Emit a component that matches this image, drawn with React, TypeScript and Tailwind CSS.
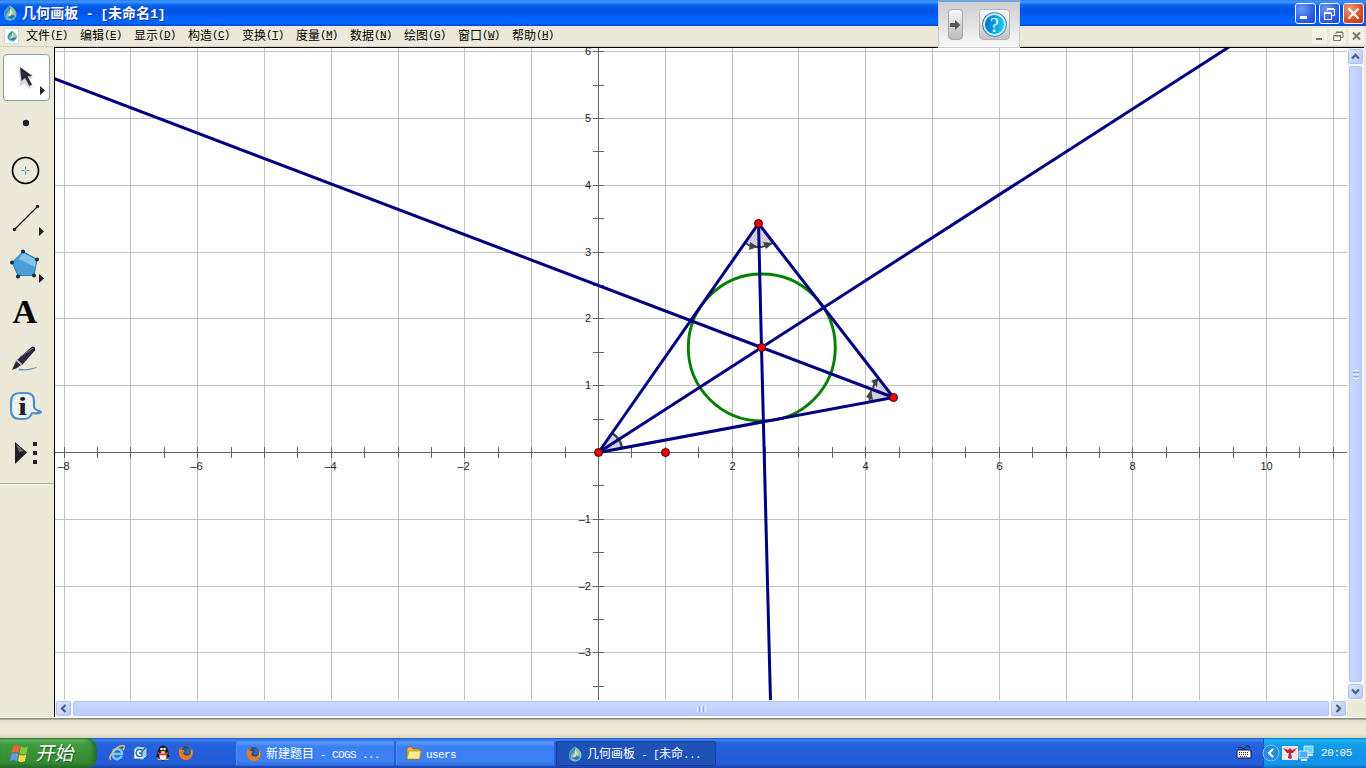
import React from 'react'

const UNIT = 66.8
const OX = 598
const OY = 452

const menus = [
  { name: "文件", key: "F" },
  { name: "编辑", key: "E" },
  { name: "显示", key: "D" },
  { name: "构造", key: "C" },
  { name: "变换", key: "T" },
  { name: "度量", key: "M" },
  { name: "数据", key: "N" },
  { name: "绘图", key: "G" },
  { name: "窗口", key: "W" },
  { name: "帮助", key: "H" },
]

// Chinese glyphs are full width, latin ones exactly half of that
const Mixed = ({ text, big = false }: { text: string; big?: boolean }) => (
  <span className="whitespace-pre">
    {text.split(/([\u4e00-\u9fff]+)/).map((part, i) =>
      i % 2 ? (
        <span key={i}>{part}</span>
      ) : (
        <span
          key={i}
          className={
            big
              ? "font-['Liberation_Mono',monospace] text-[13px] tracking-[-0.4px]"
              : "font-['Liberation_Mono',monospace] text-[11px] tracking-[-0.6px]"
          }
        >
          {part}
        </span>
      )
    )}
  </span>
)

const Drop = ({ size = 16 }: { size?: number }) => (
  <svg width={size} height={size} viewBox="0 0 16 16" className="shrink-0">
    <path d="M8 .5C4.500 3 2 5.500 2 9c0 4 2.500 6.500 6 6.500s6.500-2.500 6.500-6.500C14.500 5.500 11.500 3 8 .5Z" fill="#7fb9c4" />
    <path d="M8 1c1 3-1 5-3 7-1.500 2-1 4 0 5.500C2.500 12 1.600 9 3.500 6 5 4 6.500 3 8 1Z" fill="#2b93b4" />
    <path d="M8 3.500 12 8 9 9v4L6 10l2-2Z" fill="#efe4a6" />
    <path d="M9 2c3 2 5.500 5 5 8L10 7Z" fill="#93c99a" />
    <path d="m5 12.500 5 1.500 3.500-3-3.500-1Z" fill="#2478b8" />
  </svg>
)

const Firefox = () => (
  <svg width="16" height="16" viewBox="0 0 16 16" className="shrink-0">
    <circle cx="8" cy="8" r="7" fill="#e4661b" />
    <circle cx="8.500" cy="6.500" r="5" fill="#3268b5" />
    <path d="M5 1.500c3-1 6 0 8 2.500-2-1-4-1-5 0 2 1 1 3-1 3 1 3 4 3 6 0-1 5-7 6-10 2Z" fill="#285390" />
    <path d="M2 3c0 2 1 2 3 2 1 0 2 1 1 2L5 8c1 3 5 4 8 1l1-5c2 5-1 11-6 11C2 15-1 8 2 3Z" fill="#ee7a20" />
    <path d="M13.500 4c1.500 4-.5 8-5.500 8 4 0 6-3 5.500-8Z" fill="#ffd24a" />
  </svg>
)

const TitleBar = () => (
  <div className="flex h-[26px] shrink-0 items-center bg-[linear-gradient(#2b83f0_0,#3d95ff_2px,#0a64ed_5px,#0054e3_9px,#0055e8_13px,#0066ff_19px,#0066ff_23px,#0046c8_26px)] pr-[2px] pl-[2px] text-white">
    <Drop />
    <div className="ml-[4px] grow text-[14px] leading-[20px] font-bold [text-shadow:1px_1px_0_#0a2f8c]">
      <span className="tracking-[0.1px]">
        <Mixed text="几何画板 - [未命名1]" big />
      </span>
    </div>
    <div className="flex gap-[3px]">
      <div className="h-[21px] w-[21px] rounded-[3px] border border-white bg-[radial-gradient(circle_at_30%_25%,#6d98f5,#2c5ee5_60%,#1b45c9)]">
        <svg width="19" height="19"><rect x="4" y="12" width="7" height="3" fill="#fff" /></svg>
      </div>
      <div className="h-[21px] w-[21px] rounded-[3px] border border-white bg-[radial-gradient(circle_at_30%_25%,#6d98f5,#2c5ee5_60%,#1b45c9)]">
        <svg width="19" height="19" fill="none" stroke="#fff" shapeRendering="crispEdges">
          <path d="M7 7V5h7v6h-3M7 4h7" />
          <path d="M4 9h7v6H4zM4 8h7" />
        </svg>
      </div>
      <div className="h-[21px] w-[21px] rounded-[3px] border border-white bg-[radial-gradient(circle_at_30%_25%,#f09a82,#dc4b27_60%,#bd3010)]">
        <svg width="19" height="19"><path d="m4.500 4.500 10 10M14.500 4.500l-10 10" stroke="#fff" strokeWidth="2.200" /></svg>
      </div>
    </div>
  </div>
)

const MenuBar = () => (
  <div className="flex h-[21px] shrink-0 items-center border-b border-[#d0cdbd] bg-[#ece9d8] pl-[4px] text-[12px] leading-[18px] text-black">
    <div className="flex h-[16px] w-[15px] items-center justify-center rounded-[1px] border border-[#d4d8e4] bg-[#f7faff]">
      <Drop size={12} />
    </div>
    <div className="ml-[7px] flex grow pb-[2px]">
      {menus.map((m) => (
        <div key={m.key} className="flex w-[54px] items-center">
          <span>{m.name}</span>
          <span className="font-['Liberation_Mono',monospace] text-[11px] tracking-[-0.7px]">
            (<u className="underline-offset-1">{m.key}</u>)
          </span>
        </div>
      ))}
    </div>
    <div className="flex gap-[3px] pr-[2px] pb-px">
      <svg width="15" height="16" className="bg-[#f3f1e8]"><path d="M4 11h6" stroke="#77756b" strokeWidth="2" /></svg>
      <svg width="16" height="16" className="bg-[#f3f1e8]" fill="none" stroke="#77756b">
        <path d="M6 6V4.500h7v5h-2M6 4h7M3.500 7.500h7v5h-7zM4 8h6" />
      </svg>
      <svg width="15" height="16" className="bg-[#f3f1e8]"><path d="m4 4.500 7 7m0-7-7 7" stroke="#77756b" strokeWidth="2" /></svg>
    </div>
  </div>
)

const HelpPanel = () => (
  <div className="absolute top-0 left-[938px] flex h-[48px] w-[82px] items-start border border-t-2 border-[#c5c9d1] border-t-[#70a3df] bg-[linear-gradient(#cdcdcd,#e3e3e3_50%,#fafafa)] pt-[7px] pl-[9px]">
    <div className="flex h-[31px] w-[15px] items-center justify-center rounded-[4px] border border-[#a7a7a7] bg-[linear-gradient(#fafafa,#d8d8d8_50%,#bcbcbc)]">
      <svg width="11" height="12"><path d="M0 4h5V1l5.500 5L5 11V8H0Z" fill="#5c5c5c" /></svg>
    </div>
    <div className="ml-[16px] flex h-[31px] w-[31px] items-center justify-center rounded-[4px] border border-[#b5b5b5] bg-[linear-gradient(#fff,#d5d5d5_65%,#c2c2c2)]">
      <div className="flex h-[25px] w-[25px] items-center justify-center rounded-full border border-[#4f86b5] bg-[linear-gradient(100deg,#075dad,#0799df_45%,#1be2fa)] font-['Liberation_Serif',serif] text-[20px] leading-none text-white ring-inset ring-2 ring-[#c6edff]">
        ?
      </div>
    </div>
  </div>
)

const Flyout = () => <path d="m39 32 5 4.500-5 4.500Z" fill="#231f2c" />

const tools = [
  <>
    <path d="m19 15 1 18 4-4 5 6 4-3-5-6 5-2Z" fill="#b9bdcf" opacity=".6" />
    <path d="m20 13 1.500 14 3.500-3 4.500 8 2.500-1.500-4.500-8 5-.5Z" fill="#2c293b" />
    <path d="m40 32 5 4.500-5 4.500Z" fill="#231f2c" />
  </>,
  <circle cx="26" cy="22" r="3.200" fill="#231f30" />,
  <>
    <circle cx="25.500" cy="22.500" r="13" fill="none" stroke="#000" strokeWidth="1.700" />
    <path d="M25.500 18.500v8M21.500 22.500h8" stroke="#4a9ac4" />
    <circle cx="25.500" cy="22.500" r="1" fill="#ece9d8" />
  </>,
  <>
    <path d="M14.500 34.500 37.500 11.500" stroke="#222" strokeWidth="1.300" />
    <circle cx="14.500" cy="34.500" r="1.700" fill="#222" />
    <circle cx="37.500" cy="11.500" r="1.700" fill="#222" />
    <Flyout />
  </>,
  <>
    <path d="m23 9.500 14 8-3 16H18L12 20.500Z" fill="#4a9fd6" stroke="#2e7eb7" />
    <path d="m23 11 13 7-1 7-16-8Z" fill="#b7dcf4" opacity=".6" />
    {[[23, 9.5], [37, 17.5], [34, 33.5], [18, 34.5], [12, 20.5]].map(([x, y]) => (
      <circle key={x} cx={x} cy={y} r="2" fill="#102c42" />
    ))}
    <Flyout />
  </>,
  <text x="12.500" y="34" fontFamily="Liberation Serif, serif" fontWeight="bold" fontSize="34" fill="#000">A</text>,
  <>
    <path d="m12 34 4-9 5 4-4 3Z" fill="#292638" />
    <path d="M17 24 32 10.500q4 0 3 4L22 29Z" fill="#2e2a3d" />
    <path d="m20 21 13-9" stroke="#817d8c" />
    <path d="m16.500 24 5 4" stroke="#bcbac4" strokeWidth="1.300" />
    <path d="M19 32.500q7 2 19-2-4 4.500-19 4Z" fill="#559fc8" />
  </>,
  <>
    <path d="M20 10h6q8 0 8 8v6q0 2 7 5-3 2-9 1-2 6-8 6h-4q-9 0-9-9v-8q0-9 9-9Z" fill="#f1f1ec" stroke="#4791ce" strokeWidth="2.200" strokeLinejoin="round" />
    <text x="18" y="32" fontFamily="Liberation Serif, serif" fontWeight="bold" fontSize="25" textLength="9" lengthAdjust="spacingAndGlyphs" fill="#201d2c">i</text>
  </>,
  <>
    <path d="M15 12 27 22.500 15 34Z" fill="#211e2d" />
    <path d="m16 14 8 7-5 1Z" fill="#6b6776" />
    <path d="M33 12h4v4h-4zM33 21h4v4h-4zM33 30h4v4h-4z" fill="#231f2c" />
  </>,
]

const Toolbox = () => (
  <div className="w-[54px] shrink-0 bg-[#ece9d8] pt-[7px]">
    <div className="h-[430px] border-b border-[#aaa797]">
      {tools.map((tool, i) => (
        <div
          key={i}
          className={
            i === 0
              ? "ml-[3px] h-[47px] w-[47px] rounded-[4px] border border-[#849cab] bg-white"
              : "h-[47px]"
          }
        >
          <svg width={i === 0 ? 45 : 54} height={i === 0 ? 45 : 47} viewBox={i === 0 ? "4 1 45 45" : "0 0 54 47"}>
            {tool}
          </svg>
        </div>
      ))}
    </div>
    <div className="h-px bg-white" />
  </div>
)

const xs = [-8, -7, -6, -5, -4, -3, -2, -1, 0, 1, 2, 3, 4, 5, 6, 7, 8, 9, 10, 11]
const ys = [-3, -2, -1, 0, 1, 2, 3, 4, 5, 6]
const px = (v: number) => Math.round(OX + v * UNIT) + 0.5
const py = (v: number) => Math.round(OY - v * UNIT) + 0.5
const label = (v: number) => (v < 0 ? "–" + -v : String(v))

const Plot = () => (
  <svg width="1292" height="652" viewBox="55 48 1292 652" className="block shrink-0 bg-white" fontFamily="Liberation Sans, sans-serif" fontSize="11">
    <g stroke="#c0c0c0">
      {xs.map((v) => <path key={v} d={`M${px(v)} 48V700`} />)}
      {ys.map((v) => <path key={v} d={`M55 ${py(v)}H1347`} />)}
    </g>
    <g stroke="#646464">
      <path d="M55 452.500H1347M598.500 48V700" />
      {xs.flatMap((v) => [v, v + 0.5]).filter((v) => v < 11.200).map((v) => (
        <path key={v} d={`M${px(v)} 447v11`} />
      ))}
      {ys.flatMap((v) => [v, v - 0.5]).map((v) => (
        <path key={v} d={`M593 ${py(v)}h11`} />
      ))}
    </g>
    <g fill="#222">
      {xs.filter((v) => v && v % 2 === 0).map((v) => (
        <text key={v} x={px(v) - (v < 0 ? 1 : 0)} y="470" textAnchor="middle">{label(v)}</text>
      ))}
      {ys.filter((v) => v).map((v) => (
        <text key={v} x="591" y={py(v) + 3.5} textAnchor="end">{label(v)}</text>
      ))}
    </g>
    {/* angle marks */}
    <g fill="#d2d2de">
      <path d="M758.500 223.500 745 243q13 9 28 0Z" />
      <path d="M893.500 397.500 878 378q-10 10-8 24Z" />
      <path d="M598.500 452.500 612 433q10 7 10 15Z" />
    </g>
    <g fill="none" stroke="#444" strokeWidth="2">
      <path d="M745 243q6 4 13.500 4 8 0 14-4M878 379q-4 4-5 9M871 391q-2 5-1 11" />
      <path d="M612 433q9 6 10 15" strokeWidth="2.500" />
    </g>
    <path d="m750 242 8 5-9 3ZM763 242l10 1-7 6ZM871 381l7-3-1 9ZM866 397l5-7 2 10Z" fill="#444" />
    <circle cx="761.800" cy="347.500" r="73.500" fill="none" stroke="#008000" strokeWidth="2.900" />
    <g fill="none" stroke="#000080" strokeWidth="3">
      <path d="M598.500 452.500 758.500 223.500 893.500 397.500Z" />
      <path d="M598.500 452.500 761.500 347.500 1229 47" />
      <path d="M893.500 397.500 761.500 347.500 54 78.500" />
      <path d="M758.500 223.500 761.500 347.500 770.500 701" />
    </g>
    <g fill="#f00000" stroke="#300" strokeWidth="1">
      <circle cx="758.500" cy="223.500" r="4" />
      <circle cx="893.500" cy="397.500" r="4" />
      <circle cx="761.500" cy="347.500" r="4" />
      <circle cx="598.500" cy="452.500" r="4" />
      <circle cx="665.500" cy="452.500" r="4" />
    </g>
  </svg>
)

const ScrollButton = ({ d }: { d: string }) => (
  <div className="flex h-[15px] w-[15px] shrink-0 items-center justify-center rounded-[2px] border border-[#b0c3ef] bg-[linear-gradient(135deg,#dce6ff,#b9cafa)]">
    <svg width="11" height="11"><path d={d} fill="none" stroke="#4d6185" strokeWidth="2.300" /></svg>
  </div>
)

const VScroll = () => (
  <div className="flex w-[17px] shrink-0 flex-col items-center gap-[2px] bg-[#f8f8f4] py-[1px]">
    <ScrollButton d="m2 7.500 3.500-3.500L9 7.500" />
    <div className="flex w-[13px] grow flex-col items-center justify-center gap-px rounded-[2px] border border-[#b1c4f1] bg-[linear-gradient(90deg,#cad8ff,#bccdfb)]">
      <div className="h-px w-[6px] bg-[#edf3ff]" />
      <div className="h-px w-[6px] bg-[#8fa9dc]" />
      <div className="h-px w-[6px] bg-[#edf3ff]" />
      <div className="h-px w-[6px] bg-[#8fa9dc]" />
      <div className="h-px w-[6px] bg-[#edf3ff]" />
    </div>
    <ScrollButton d="M2 3.500 5.500 7 9 3.500" />
  </div>
)

const HScroll = () => (
  <div className="flex h-[17px] shrink-0 items-center bg-[#f8f8f4]">
    <div className="flex w-[1292px] items-center gap-[2px] px-[1px]">
      <ScrollButton d="M7.500 2 4 5.500 7.500 9" />
      <div className="flex h-[15px] grow items-center justify-center gap-px rounded-[2px] border border-[#b1c4f1] bg-[linear-gradient(#cad8ff,#bccdfb)]">
        <div className="h-[6px] w-px bg-[#edf3ff]" />
        <div className="h-[6px] w-px bg-[#8fa9dc]" />
        <div className="h-[6px] w-px bg-[#edf3ff]" />
        <div className="h-[6px] w-px bg-[#8fa9dc]" />
        <div className="h-[6px] w-px bg-[#edf3ff]" />
      </div>
      <ScrollButton d="M3.500 2 7 5.500 3.500 9" />
    </div>
    <div className="h-full grow bg-[#ece9d8]" />
  </div>
)

const Task = ({ icon, text, active = false }: { icon: React.ReactNode; text: string; active?: boolean }) => (
  <div
    className={
      active
        ? "flex h-[25px] w-[160px] items-center gap-[4px] rounded-[2px] border border-[#173e99] bg-[#1e52b7] pl-[10px]"
        : "flex h-[25px] w-[159px] items-center gap-[4px] rounded-[2px] border border-[#4c8ef6] border-r-[#2b61d6] border-b-[#2b61d6] bg-[linear-gradient(#599af9,#3c81f3_20%,#3c81f3_80%,#3273e5)] pl-[9px]"
    }
  >
    {icon}
    <Mixed text={text} />
  </div>
)

const Taskbar = () => (
  <div className="flex h-[30px] shrink-0 bg-[linear-gradient(#2459c8,#3b83f0_2px,#2663df_5px,#245ddb_18px,#235bd8_26px,#1941a5)] text-[12px] leading-[18px] text-white">
    <div className="flex w-[97px] items-center rounded-r-[10px] bg-[linear-gradient(#327a2f,#6cbd68_2px,#3f9b3d_6px,#388e36_20px,#328b31_25px,#246a24)] pl-[10px] shadow-[inset_-4px_0_5px_#266f28]">
      <svg width="20" height="20" viewBox="0 0 20 20">
        <path d="M3 3q3-2 7 0L8.500 10q-3-2-7 0Z" fill="#ed6435" />
        <path d="M11 3.500q3 2 7 0L16.500 10.500q-3 2-7 0Z" fill="#86c83f" />
        <path d="M1.300 11q3-2 7 0L7 18q-4-2-7 0Z" fill="#6495f0" />
        <path d="M9.300 11.500q3 2 7 0L15 18q-4 2-7 0Z" fill="#f9d44c" />
      </svg>
      <span className="ml-[7px] -skew-x-12 pb-[3px] text-[19px] leading-[27px] [text-shadow:1px_1px_1px_#1b4f1b]">开始</span>
    </div>
    <div className="flex w-[139px] items-center gap-[7px] pl-[12px]">
      <svg width="16" height="16" viewBox="0 0 16 16" fill="none">
        <path d="M13 9H4q0-5 4-5 5 0 5 5ZM13 11q-4 5-8 2-2-2-1-5" stroke="#76c9ff" strokeWidth="2.500" />
        <path d="M2 15Q-1 13 4 7 11-1 15 1q1 1-1 4" stroke="#e4c452" strokeWidth="1.500" />
      </svg>
      <svg width="16" height="16" viewBox="0 0 16 16">
        <path d="m2 3 4-2 9 1v9l-4 4-10-1Z" fill="#9bd2f6" stroke="#245c9b" />
        <path d="M3 5h8v8H3Z" fill="#fff" />
        <path d="M10 5q-5-2-6 3 1 5 6 3V8H7m1 1 6-7" fill="none" stroke="#2476b4" strokeWidth="1.500" />
      </svg>
      <svg width="16" height="16" viewBox="0 0 16 16">
        <ellipse cx="8" cy="8" rx="5.500" ry="7.500" fill="#17171a" />
        <path d="m3 7-2 5h3l1-3m7-2 3 5h-3l-1-3" fill="#17171a" />
        <ellipse cx="8" cy="11" rx="3.500" ry="4" fill="#fff" />
        <circle cx="6.500" cy="4" r="1.300" fill="#fff" /><circle cx="9.500" cy="4" r="1.300" fill="#fff" />
        <path d="M5 6h6l-3 1.500ZM2 15q2-3 5 0M9 15q3-3 5 0" fill="#f5b82d" />
        <path d="M3 7q5 3 10 0v2q-5 3-10 0Z" fill="#d83c29" />
      </svg>
      <Firefox />
    </div>
    <div className="flex grow items-center gap-px pt-px">
      <Task icon={<Firefox />} text="新建题目 - COGS ..." />
      <Task
        icon={
          <svg width="16" height="16" viewBox="0 0 16 16">
            <path d="M1 3q0-2 2-2h3l1 2h7v10H1Z" fill="#e6b936" stroke="#8a651a" strokeWidth=".7" />
            <path d="m1 13 2-8h12l-1.500 8Z" fill="#ffe992" stroke="#b88a25" strokeWidth=".7" />
          </svg>
        }
        text="users"
      />
      <Task icon={<Drop />} text="几何画板 - [未命..." active />
    </div>
    <svg width="16" height="30" className="mr-[11px]">
      <path d="M2 10q2-2 4 0t4-1 4 1" fill="none" stroke="#071b4b" />
      <rect x="1" y="12" width="14" height="8" rx="1" fill="#fff" stroke="#111" />
      <path d="M3 14.500h10M3 16.500h10M4 18.500h8" stroke="#222" strokeDasharray="1 1" />
    </svg>
    <div className="flex w-[103px] items-center bg-[linear-gradient(#0d77c7,#1bb4f8_2px,#139ee9_6px,#1290e8_20px,#1199e9_26px,#0d6cbc)] shadow-[inset_1px_0_0_#095bc9]">
      <svg width="18" height="18" viewBox="0 0 18 18" className="-ml-[1px] shrink-0">
        <circle cx="9" cy="9" r="8" fill="#268be7" stroke="#80c5fa" />
        <path d="m11 5-4 4 4 4" fill="none" stroke="#fff" strokeWidth="2" />
      </svg>
      <svg width="16" height="16" viewBox="0 0 16 16" className="ml-[2px]">
        <rect x="0" y="1" width="16" height="14" fill="#efe6eb" />
        <path d="m1 3 5 2 2-2 2 2 5-2-4 5H9l1 5-2 1-2-1 1-5H5Z" fill="#bd2440" />
      </svg>
      <svg width="17" height="16" viewBox="0 0 17 16">
        <path d="M6 1h9v7H6z" fill="#78d0fc" stroke="#c5edff" />
        <path d="M1 6h9v7H1z" fill="#4bb0ef" stroke="#c5e5ff" />
        <path d="M3 15h6m1-5h5" stroke="#e0efff" strokeWidth="2" />
      </svg>
      <span className="ml-[6px] font-['Liberation_Mono',monospace] text-[11px] tracking-[-0.4px]">20:05</span>
    </div>
  </div>
)

const App = () => {
  return (
    <div className="relative flex h-[768px] w-[1366px] flex-col overflow-hidden bg-[#ece9d8] font-['Noto_Sans_CJK_SC',sans-serif]">
      <TitleBar />
      <MenuBar />
      <div className="flex h-[670px] shrink-0">
        <Toolbox />
        <div className="flex w-[1310px] flex-col border-t border-l border-black">
          <div className="flex">
            <Plot />
            <VScroll />
          </div>
          <HScroll />
        </div>
      </div>
      <div className="h-[21px] shrink-0 border-t border-white bg-[linear-gradient(#89877a_0,#89877a_1px,#dedbc9_2px,#ece9d8_7px,#ece9d8_15px,#d7d4bd)]" />
      <Taskbar />
      <HelpPanel />
    </div>
  )
}

export default App
